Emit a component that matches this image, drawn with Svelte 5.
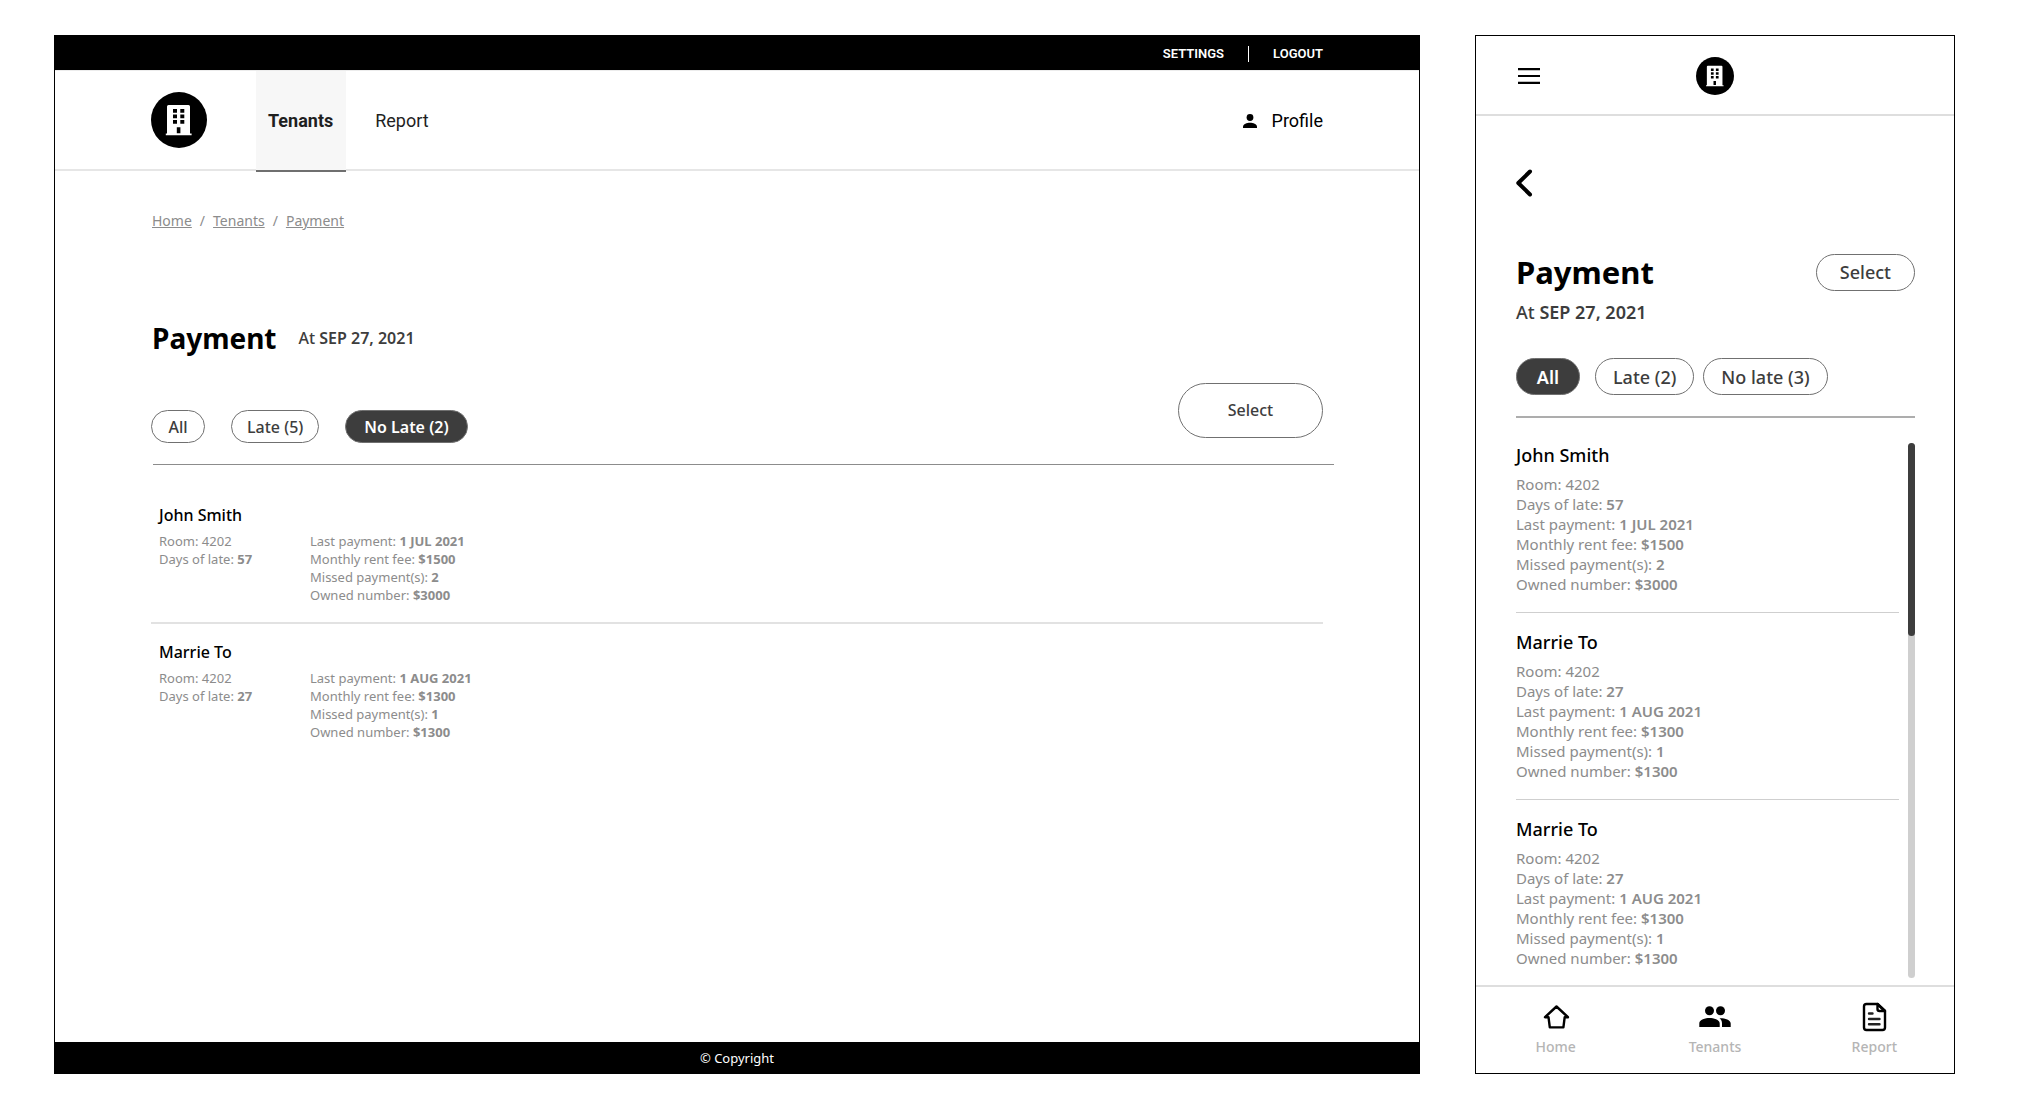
<script>
  const desktopTenants = [
    { name: 'John Smith', room: '4202', days: '57', last: '1 JUL 2021', fee: '$1500', missed: '2', owned: '$3000' },
    { name: 'Marrie To', room: '4202', days: '27', last: '1 AUG 2021', fee: '$1300', missed: '1', owned: '$1300' },
  ];
  const mobileTenants = [desktopTenants[0], desktopTenants[1], desktopTenants[1]];

  const desktopFilters = ['All', 'Late (5)', 'No Late (2)'];
  const mobileFilters = ['All', 'Late (2)', 'No late (3)'];
  let desktopFilter = $state(2);
  let mobileFilter = $state(0);
</script>

{#snippet logo()}
  <svg class="logo" viewBox="0 0 56 56" aria-hidden="true">
    <circle cx="28" cy="28" r="28" />
    <path
      fill="#fff"
      fill-rule="evenodd"
      d="M17.5 13H37.5Q39 13 39 14.500V41.500H40.600V43.200H14.800V41.500H16V14.500Q16 13 17.500 13ZM22 17v3.700h4V17ZM29.300 17v3.700h4V17ZM22 22.500v3.700h4V22.500ZM29.300 22.500v3.700h4V22.500ZM22 28v3.700h4V28ZM29.300 28v3.700h4V28ZM25.800 35.300V41.300h3.600V35.300Z"
    />
  </svg>
{/snippet}

<div class="page">
  <section class="frame desktop" aria-label="Desktop">
    <div class="topbar">
      <a href="#settings">SETTINGS</a>
      <span class="bar"></span>
      <a href="#logout">LOGOUT</a>
    </div>
    <header class="header">
      <a href="#home" aria-label="Home">{@render logo()}</a>
      <nav class="tabs">
        <a href="#tenants" class="active">Tenants</a>
        <a href="#report">Report</a>
      </nav>
      <a class="profile" href="#profile">
        <svg viewBox="0 0 14 14" aria-hidden="true">
          <circle cx="7" cy="3.500" r="3.400" />
          <path d="M0 14v-1.500C0 10 4 8.700 7 8.700s7 1.300 7 3.800V14Z" />
        </svg>
        Profile
      </a>
    </header>
    <main class="content">
      <nav class="crumbs" aria-label="Breadcrumb">
        <a href="#home">Home</a><span>/</span><a href="#tenants">Tenants</a><span>/</span><a href="#payment">Payment</a>
      </nav>
      <div class="title">
        <h1>Payment</h1>
        <p class="date">At <b>SEP 27, 2021</b></p>
      </div>
      <div class="toolbar">
        <div class="filters">
          {#each desktopFilters as label, i}
            <button class:on={desktopFilter === i} onclick={() => (desktopFilter = i)}>{label}</button>
          {/each}
        </div>
        <button class="select">Select</button>
      </div>
      <div class="rule"></div>
      <div class="list">
        {#each desktopTenants as t}
          <article>
            <h2>{t.name}</h2>
            <div class="details">
              <div>
                <p>Room: {t.room}</p>
                <p>Days of late: <b>{t.days}</b></p>
              </div>
              <div>
                <p>Last payment: <b>{t.last}</b></p>
                <p>Monthly rent fee: <b>{t.fee}</b></p>
                <p>Missed payment(s): <b>{t.missed}</b></p>
                <p>Owned number: <b>{t.owned}</b></p>
              </div>
            </div>
          </article>
        {/each}
      </div>
    </main>
    <footer>© Copyright</footer>
  </section>

  <section class="frame mobile" aria-label="Mobile">
    <header class="header">
      <button class="icon" aria-label="Menu">
        <svg width="24" height="18" viewBox="0 0 24 18" aria-hidden="true">
          <path d="M2 2.200H24M2 9H24M2 15.800H24" stroke="#000" stroke-width="2.200" />
        </svg>
      </button>
      <a href="#home" aria-label="Home">{@render logo()}</a>
    </header>
    <main class="content">
      <button class="icon back" aria-label="Back">
        <svg width="17" height="28" viewBox="0 0 17 28" aria-hidden="true">
          <path d="M14 2.500L2.300 14L14 25.500" fill="none" stroke="#000" stroke-width="4" stroke-linecap="round" stroke-linejoin="round" />
        </svg>
      </button>
      <div class="title">
        <h1>Payment</h1>
        <button class="select">Select</button>
      </div>
      <p class="date">At <b>SEP 27, 2021</b></p>
      <div class="filters">
        {#each mobileFilters as label, i}
          <button class:on={mobileFilter === i} onclick={() => (mobileFilter = i)}>{label}</button>
        {/each}
      </div>
      <div class="rule"></div>
      <div class="scroller">
        <div class="list">
          {#each mobileTenants as t}
            <article>
              <h2>{t.name}</h2>
              <div class="details">
                <p>Room: {t.room}</p>
                <p>Days of late: <b>{t.days}</b></p>
                <p>Last payment: <b>{t.last}</b></p>
                <p>Monthly rent fee: <b>{t.fee}</b></p>
                <p>Missed payment(s): <b>{t.missed}</b></p>
                <p>Owned number: <b>{t.owned}</b></p>
              </div>
            </article>
          {/each}
        </div>
        <div class="track"><div class="thumb"></div></div>
      </div>
    </main>
    <nav class="bottom">
      <a href="#home">
        <svg viewBox="0 0 32 32" aria-hidden="true">
          <path d="M16.500 5.500L5 16.200H8.500L9.800 26.400H23.400L24.700 16.200H28Z" fill="none" stroke="#000" stroke-width="2.400" stroke-linejoin="round" />
        </svg>
        Home
      </a>
      <a href="#tenants">
        <svg viewBox="0 0 32 32" aria-hidden="true">
          <circle cx="10.500" cy="9.800" r="4.500" />
          <circle cx="21.500" cy="9.800" r="4.500" />
          <path d="M.3 26V22.500C.3 18.500 6.500 17 10.500 17S20.700 18.500 20.700 22.500V26ZM20.500 17.300C25 17 31.700 18.600 31.700 22.500V26H23V22.500C23 20.200 22.200 18.600 20.500 17.300Z" />
        </svg>
        Tenants
      </a>
      <a href="#report">
        <svg viewBox="0 0 32 32" aria-hidden="true">
          <g fill="none" stroke="#000" stroke-width="2.400" stroke-linejoin="round">
            <path d="M19.500 3H8.500Q6 3 6 5.500V26.500Q6 29 8.500 29H24.500Q27 29 27 26.500V10Z" />
            <path d="M19.500 3V8Q19.500 10 21.500 10H27Z" />
            <path d="M11 12.500H14.500M11 18H21.500M11 23.200H21.500" stroke-linecap="round" stroke="#222" />
          </g>
        </svg>
        Report
      </a>
    </nav>
  </section>
</div>

<style>
  :global(body) {
    background: #fff;
  }
  .page {
    box-sizing: border-box;
    min-height: 100vh;
    padding: 35px 80px 35px 54px;
    display: grid;
    grid-template-columns: 1366fr 480fr;
    gap: 55px;
    font-family: 'Noto Sans', sans-serif;
    color: #000;
  }
  .page * {
    box-sizing: border-box;
  }
  .frame {
    display: flex;
    flex-direction: column;
    border: 1px solid #000;
    background: #fff;
  }
  h1,
  h2,
  p {
    margin: 0;
  }
  a {
    color: inherit;
    text-decoration: none;
  }
  button {
    font: inherit;
    color: inherit;
    background: none;
    border: 0;
    padding: 0;
    cursor: pointer;
  }
  svg {
    display: block;
  }
  h1 {
    font-weight: 700;
    line-height: 40px;
  }
  h2 {
    font-weight: 500;
    line-height: 24px;
  }
  .date {
    color: #3d3d3d;
    font-weight: 500;
    line-height: 24px;
  }
  .date b {
    font-weight: 600;
  }
  .filters {
    display: flex;
  }
  .filters button,
  .select {
    border: 1px solid #707070;
    border-radius: 32px;
    color: #3d3d3d;
    font-weight: 500;
  }
  .filters .on {
    background: #3d3d3d;
    color: #fff;
    font-weight: 600;
  }
  .details {
    color: #8c8c8c;
  }
  .details b {
    font-weight: 700;
  }

  /* Desktop */
  .topbar {
    height: 34px;
    padding: 2px 96px 0;
    background: #000;
    color: #fff;
    display: flex;
    align-items: center;
    justify-content: flex-end;
    gap: 24px;
    font: 600 13px/16px Roboto, sans-serif;
  }
  .bar {
    width: 1px;
    height: 16px;
    background: #fff;
  }
  .desktop .header {
    height: 101px;
    padding: 0 96px;
    border-top: 1px solid #ececec;
    border-bottom: 2px solid #e6e6e6;
    display: flex;
    align-items: center;
    font: 400 18px/24px Roboto, sans-serif;
  }
  .desktop .logo {
    width: 56px;
    height: 56px;
  }
  .tabs {
    align-self: stretch;
    margin: 0 auto -3px 49px;
    display: flex;
    gap: 17px;
    color: #1f1f1f;
  }
  .tabs a {
    display: flex;
    align-items: center;
    padding: 0 12px;
    border-bottom: 2px solid transparent;
  }
  .tabs .active {
    padding-right: 13px;
    background: #f7f7f7;
    border-color: #6f6f6f;
    font-weight: 700;
  }
  .profile {
    display: flex;
    align-items: center;
    gap: 15px;
    padding-top: 2px;
  }
  .profile svg {
    width: 14px;
    height: 14px;
  }
  .desktop .content {
    flex: 1;
    padding: 40px 96px;
  }
  .crumbs {
    display: flex;
    gap: 8px;
    padding-left: 1px;
    font-size: 14px;
    line-height: 20px;
    color: #8c8c8c;
  }
  .crumbs a {
    text-decoration: underline;
  }
  .desktop .title {
    display: flex;
    align-items: center;
    gap: 22px;
    margin-top: 87px;
    padding-left: 1px;
  }
  .desktop h1 {
    font-size: 28px;
  }
  .desktop .date,
  .desktop h2,
  .desktop .toolbar {
    font-size: 16px;
  }
  .toolbar {
    display: flex;
    justify-content: space-between;
    align-items: flex-start;
    margin-top: 25px;
  }
  .desktop .filters {
    gap: 26px;
    margin-top: 27px;
  }
  .desktop .filters button {
    height: 33px;
    min-width: 54px;
    padding: 0 15px;
  }
  .desktop .filters .on {
    padding: 0 18px;
  }
  .desktop .select {
    width: 145px;
    height: 55px;
    padding-bottom: 2px;
  }
  .desktop .rule {
    height: 1px;
    margin: 21px -11px 0 2px;
    background: #8c8c8c;
  }
  .desktop .list {
    padding-top: 22px;
  }
  .desktop article {
    padding: 16px 8px 18px;
  }
  .desktop article + article {
    border-top: 2px solid #e2e2e2;
  }
  .desktop .details {
    display: grid;
    grid-template-columns: 151px 1fr;
    margin-top: 5px;
    font-size: 13px;
    line-height: 18px;
  }
  footer {
    height: 31px;
    background: #000;
    color: #fff;
    font-size: 13px;
    line-height: 32px;
    text-align: center;
  }

  /* Mobile */
  .mobile .header {
    height: 80px;
    padding: 2px 40px 0;
    border-bottom: 2px solid #dedede;
    display: grid;
    grid-template-columns: 1fr auto 1fr;
    align-items: center;
  }
  .icon {
    justify-self: start;
    align-self: flex-start;
  }
  .header .icon {
    align-self: center;
  }
  .mobile .logo {
    width: 38px;
    height: 38px;
  }
  .mobile .content {
    flex: 1;
    display: flex;
    flex-direction: column;
    padding: 53px 39px 7px 40px;
  }
  .mobile .title {
    display: flex;
    align-items: center;
    justify-content: space-between;
    margin-top: 55px;
  }
  .mobile h1 {
    font-size: 31px;
  }
  .mobile .date,
  .mobile h2,
  .mobile .filters,
  .mobile .select {
    font-size: 18px;
  }
  .mobile .date {
    margin-top: 8px;
  }
  .mobile .filters {
    gap: 9px;
    margin-top: 34px;
  }
  .mobile .filters button,
  .mobile .select {
    height: 37px;
    min-width: 64px;
    padding: 0 17px;
  }
  .mobile .select {
    padding: 0 23px;
  }
  .mobile .filters button:first-child {
    margin-right: 6px;
  }
  .mobile .rule {
    height: 2px;
    margin-top: 21px;
    background: #adadad;
  }
  .scroller {
    flex: 1;
    display: flex;
    gap: 9px;
    margin-top: 25px;
  }
  .mobile .list {
    flex: 1;
  }
  .mobile article + article {
    margin-top: 18px;
    padding-top: 17px;
    border-top: 1px solid #cfcfcf;
  }
  .mobile .details {
    margin-top: 7px;
    font-size: 15px;
    line-height: 20px;
  }
  .mobile .details b {
    font-weight: 600;
  }
  .track {
    width: 7px;
    border-radius: 4px;
    background: #cfcfcf;
  }
  .thumb {
    height: 36%;
    border-radius: 4px;
    background: #3d3d3d;
  }
  .bottom {
    display: grid;
    grid-template-columns: 1fr 1fr 1fr;
    height: 88px;
    padding-top: 14px;
    border-top: 2px solid #dedede;
    color: #b5b5b5;
    font-size: 14px;
    font-weight: 500;
    line-height: 20px;
  }
  .bottom a {
    display: flex;
    flex-direction: column;
    align-items: center;
    gap: 4px;
  }
  .bottom svg {
    width: 32px;
    height: 32px;
  }
</style>
